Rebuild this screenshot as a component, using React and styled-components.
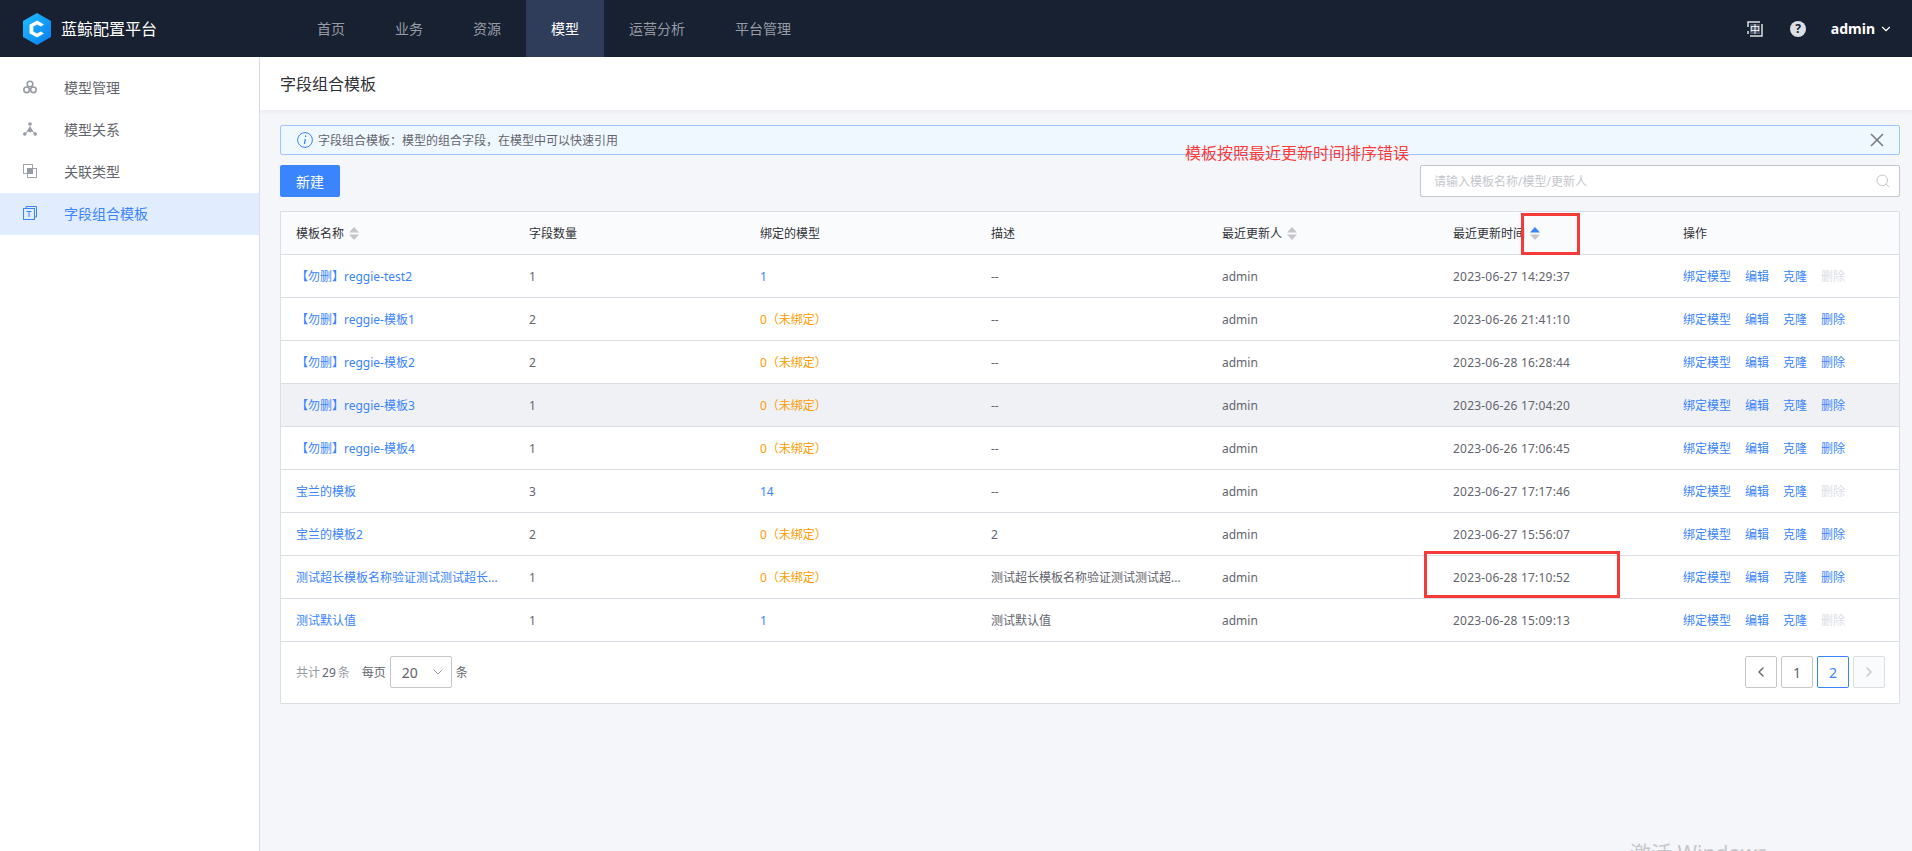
import React from 'react';
import styled, { createGlobalStyle } from 'styled-components';
import { ChevronDown, ChevronLeft, ChevronRight, Search, X } from 'lucide-react';

const GlobalStyle = createGlobalStyle`
  html, body {
    margin: 0;
    height: 100%;
    overflow: hidden;
    background: #f5f6fa;
  }
  body {
    font-family: "Noto Sans", "Noto Sans CJK SC", sans-serif;
    font-size: 12px;
    color: #63656e;
  }
  * {
    box-sizing: border-box;
  }
`;

const Page = styled.div`
  position: relative;
  width: 1912px;
  height: 851px;
  overflow: hidden;
`;

const TopBar = styled.header`
  display: flex;
  align-items: center;
  height: 57px;
  background: #182132;
`;

const Brand = styled.div`
  display: flex;
  align-items: center;
  gap: 10px;
  width: 292px;
  padding-left: 23px;
  font-size: 16px;
  color: #fff;
`;

const BrandName = styled.span`
  padding-bottom: 2px;
`;

const Nav = styled.nav`
  display: flex;
  align-self: stretch;
  flex: 1;
`;

const NavItem = styled.a`
  display: flex;
  align-items: center;
  padding: 0 25px 2px;
  font-size: 14px;
  color: ${props => (props.$active ? '#fff' : '#979ba5')};
  background: ${props => (props.$active ? '#2f3c5a' : 'transparent')};
`;

const TopRight = styled.div`
  display: flex;
  align-items: center;
  padding-right: 19px;
`;

const TopIcon = styled.span`
  display: flex;
  margin-right: 27px;
`;

const UserName = styled.span`
  display: flex;
  align-items: center;
  gap: 4px;
  margin-left: -2px;
  font-size: 14px;
  font-weight: 700;
  color: #fff;
`;

const Body = styled.div`
  display: flex;
  height: 794px;
`;

const Sidebar = styled.aside`
  width: 260px;
  padding-top: 10px;
  background: #fff;
  border-right: 1px solid #dcdee5;
`;

const SideItem = styled.a`
  display: flex;
  align-items: center;
  gap: 27px;
  height: 42px;
  padding: 0 0 2px 23px;
  font-size: 14px;
  color: ${props => (props.$active ? '#3a84ff' : '#63656e')};
  background: ${props => (props.$active ? '#e1ecff' : 'transparent')};
`;

const Main = styled.main`
  flex: 1;
  min-width: 0;
`;

const TitleBar = styled.div`
  display: flex;
  align-items: center;
  height: 53px;
  padding: 0 0 2px 20px;
  font-size: 16px;
  color: #313238;
  background: #fff;
  box-shadow: 0 2px 4px rgba(25, 25, 41, 0.05);
`;

const Content = styled.div`
  padding: 15px 12px 0 20px;
`;

const Alert = styled.div`
  display: flex;
  align-items: center;
  height: 30px;
  padding: 0 11px 0 16px;
  background: #f0f8ff;
  border: 1px solid #a3c5fd;
  border-radius: 2px;
`;

const AlertText = styled.span`
  flex: 1;
  margin-left: 5px;
`;

const Toolbar = styled.div`
  display: flex;
  justify-content: space-between;
  margin: 10px 0 14px;
`;

const PrimaryButton = styled.button`
  width: 60px;
  height: 32px;
  padding: 0;
  font: inherit;
  font-size: 14px;
  color: #fff;
  background: #3a84ff;
  border: none;
  border-radius: 2px;
`;

const SearchBox = styled.div`
  display: flex;
  align-items: center;
  justify-content: space-between;
  width: 480px;
  height: 32px;
  padding: 0 8px 0 13px;
  color: #c4c6cc;
  background: #fff;
  border: 1px solid #c4c6cc;
  border-radius: 2px;
`;

const TableCard = styled.div`
  background: #fff;
  border: 1px solid #dcdee5;
  border-radius: 1px;
`;

const Table = styled.table`
  width: 100%;
  border-collapse: collapse;
  table-layout: fixed;
`;

const Col = styled.col`
  width: ${props => props.$w}px;
`;

const Th = styled.th`
  height: 42px;
  padding: 0 15px;
  font-weight: 400;
  text-align: left;
  color: #313238;
  background: #fafbfd;
  border-bottom: 1px solid #dcdee5;
`;

const Tr = styled.tr`
  background: ${props => (props.$hover ? '#f0f1f5' : '#fff')};
`;

const Td = styled.td`
  height: 43px;
  padding: 1px 15px 0;
  white-space: nowrap;
  border-bottom: 1px solid #dcdee5;
`;

const TimeText = styled.span`
  letter-spacing: 0.2px;
`;

const Link = styled.a`
  color: ${props => (props.$disabled ? '#dcdee5' : '#3a84ff')};
  margin-right: ${props => props.$gap || 0}px;
`;

const Warn = styled.span`
  color: #ff9c01;
`;

const Footer = styled.div`
  display: flex;
  align-items: center;
  justify-content: space-between;
  height: 61px;
  padding: 0 14px 0 15px;
`;

const Total = styled.div`
  display: flex;
  align-items: center;
  color: #979ba5;
`;

const Strong = styled.span`
  margin: 0 2px;
  color: #63656e;
`;

const PerPage = styled.span`
  margin: 0 4px 0 12px;
  color: #63656e;
`;

const Unit = styled.span`
  color: #63656e;
`;

const PageSelect = styled.div`
  display: flex;
  align-items: center;
  justify-content: space-between;
  width: 62px;
  height: 32px;
  margin-right: 4px;
  padding: 0 5px 0 11px;
  font-size: 14px;
  color: #63656e;
  background: #fff;
  border: 1px solid #c4c6cc;
  border-radius: 2px;
`;

const Pager = styled.div`
  display: flex;
  gap: 4px;
`;

const PageButton = styled.span`
  display: flex;
  align-items: center;
  justify-content: center;
  width: 32px;
  height: 32px;
  font-size: 14px;
  color: ${props => (props.$current ? '#3a84ff' : props.$disabled ? '#c4c6cc' : '#63656e')};
  background: ${props => (props.$disabled ? '#fafbfd' : '#fff')};
  border: 1px solid ${props => (props.$current ? '#3a84ff' : props.$disabled ? '#dcdee5' : '#c4c6cc')};
  border-radius: 2px;
`;

const Note = styled.div`
  position: absolute;
  left: 1185px;
  top: 142px;
  font-size: 16px;
  line-height: 22px;
  color: #ff3a3a;
`;

const Mark = styled.div`
  position: absolute;
  left: ${props => props.$x}px;
  top: ${props => props.$y}px;
  width: ${props => props.$w}px;
  height: ${props => props.$h}px;
  border: 3px solid #f53a3a;
`;

const Watermark = styled.div`
  position: absolute;
  left: 1630px;
  top: 838px;
  font-size: 21px;
  line-height: 30px;
  color: #c6c7ca;
`;

const SortIcon = styled.svg`
  margin-left: 5px;
  vertical-align: -2px;
`;

const Sort = ({ active }) => (
  <SortIcon width="10" height="13" viewBox="0 0 10 13">
    <path d="M5 0 10 5.5H0Z" fill={active ? '#3a84ff' : '#c4c6cc'} />
    <path d="M0 7.5H10L5 13Z" fill="#c4c6cc" />
  </SortIcon>
);

const Logo = () => (
  <svg width="28" height="32" viewBox="0 0 28 32">
    <defs>
      <linearGradient id="logoFill" x1="0" y1="0" x2="1" y2="1">
        <stop offset="0" stopColor="#1ec0ff" />
        <stop offset="1" stopColor="#0a7bf0" />
      </linearGradient>
    </defs>
    <path d="M14 0 28 8V24L14 32 0 24V8Z" fill="url(#logoFill)" />
    <path d="M21 11.5 14 7.5 6.5 11.8V20.2L14 24.5 21 20.5 18 18.4 14 20.6 10.3 18.5V13.5L14 11.4 18 13.6Z" fill="#fff" />
  </svg>
);

const ModelIcon = () => (
  <svg width="14" height="14" viewBox="0 0 14 14" fill="none" stroke="#979ba5" strokeWidth="1.6">
    <circle cx="7" cy="4" r="2.8" />
    <circle cx="3.6" cy="9.8" r="2.8" />
    <circle cx="10.4" cy="9.8" r="2.8" />
  </svg>
);

const RelationIcon = () => (
  <svg width="14" height="14" viewBox="0 0 14 14" fill="#979ba5">
    <circle cx="7" cy="2" r="1.8" />
    <circle cx="1.8" cy="12" r="1.8" />
    <circle cx="12.2" cy="12" r="1.8" />
    <path d="M7 4 10 9 7 10.4 4 9Z" />
    <path d="M2 11.4 5 9M12 11.4 9 9" stroke="#979ba5" />
  </svg>
);

const LinkTypeIcon = () => (
  <svg width="14" height="14" viewBox="0 0 14 14" fill="none" stroke="#a3a6ae">
    <rect x="0.5" y="0.5" width="9" height="9" />
    <rect x="4.5" y="4.5" width="9" height="9" />
    <rect x="4" y="4" width="6" height="6" fill="#979ba5" stroke="none" />
  </svg>
);

const TemplateIcon = () => (
  <svg width="14" height="14" viewBox="0 0 14 14" fill="none" stroke="#3a84ff">
    <path d="M3 2.5V0.5H13.5V11H11.5" />
    <rect x="0.5" y="2.5" width="11" height="11" />
    <path d="M3.5 5.5H8.5M6 5.5V11" />
  </svg>
);

const InfoIcon = () => (
  <svg width="16" height="16" viewBox="0 0 16 16" fill="none">
    <circle cx="8" cy="8" r="7.4" stroke="#3a84ff" />
    <path d="M8.6 3.6V5M8.4 6.8 7.4 12" stroke="#3a84ff" strokeWidth="1.3" />
  </svg>
);

const LangIcon = () => (
  <svg width="16" height="16" viewBox="0 0 16 16">
    <path d="M1 6V1H13M15 3V15H3M1 13V10" fill="none" stroke="#dcdee5" strokeWidth="1.5" />
    <rect x="3" y="3" width="10" height="10" fill="#4a5468" />
    <text x="8" y="12" fontSize="10" textAnchor="middle" fill="#fff">中</text>
  </svg>
);

const HelpIcon = () => (
  <svg width="16" height="16" viewBox="0 0 16 16">
    <circle cx="8" cy="8" r="8" fill="#dcdee5" />
    <text x="8" y="12.2" fontSize="12" fontWeight="700" textAnchor="middle" fill="#182132">?</text>
  </svg>
);

const navItems = ['首页', '业务', '资源', '模型', '运营分析', '平台管理'];

const sideItems = [
  { label: '模型管理', icon: <ModelIcon /> },
  { label: '模型关系', icon: <RelationIcon /> },
  { label: '关联类型', icon: <LinkTypeIcon /> },
  { label: '字段组合模板', icon: <TemplateIcon />, active: true },
];

const colWidths = [233, 231, 231, 231, 231, 230];

const rows = [
  { name: '【勿删】reggie-test2', count: 1, bound: 1, desc: '--', time: '2023-06-27 14:29:37', locked: true },
  { name: '【勿删】reggie-模板1', count: 2, bound: 0, desc: '--', time: '2023-06-26 21:41:10' },
  { name: '【勿删】reggie-模板2', count: 2, bound: 0, desc: '--', time: '2023-06-28 16:28:44' },
  { name: '【勿删】reggie-模板3', count: 1, bound: 0, desc: '--', time: '2023-06-26 17:04:20', hover: true },
  { name: '【勿删】reggie-模板4', count: 1, bound: 0, desc: '--', time: '2023-06-26 17:06:45' },
  { name: '宝兰的模板', count: 3, bound: 14, desc: '--', time: '2023-06-27 17:17:46', locked: true },
  { name: '宝兰的模板2', count: 2, bound: 0, desc: '2', time: '2023-06-27 15:56:07' },
  { name: '测试超长模板名称验证测试测试超长...', count: 1, bound: 0, desc: '测试超长模板名称验证测试测试超...', time: '2023-06-28 17:10:52' },
  { name: '测试默认值', count: 1, bound: 1, desc: '测试默认值', time: '2023-06-28 15:09:13', locked: true },
];

function App() {
  return (
    <Page>
      <GlobalStyle />
      <TopBar>
        <Brand>
          <Logo />
          <BrandName>蓝鲸配置平台</BrandName>
        </Brand>
        <Nav>
          {navItems.map(item => (
            <NavItem key={item} $active={item === '模型'}>{item}</NavItem>
          ))}
        </Nav>
        <TopRight>
          <TopIcon><LangIcon /></TopIcon>
          <TopIcon><HelpIcon /></TopIcon>
          <UserName>admin <ChevronDown size={14} strokeWidth={2} /></UserName>
        </TopRight>
      </TopBar>
      <Body>
        <Sidebar>
          {sideItems.map(item => (
            <SideItem key={item.label} $active={item.active}>
              {item.icon}
              {item.label}
            </SideItem>
          ))}
        </Sidebar>
        <Main>
          <TitleBar>字段组合模板</TitleBar>
          <Content>
            <Alert>
              <InfoIcon />
              <AlertText>字段组合模板：模型的组合字段，在模型中可以快速引用</AlertText>
              <X size={22} strokeWidth={1.8} color="#7a7d86" />
            </Alert>
            <Toolbar>
              <PrimaryButton>新建</PrimaryButton>
              <SearchBox>
                请输入模板名称/模型/更新人
                <Search size={16} strokeWidth={1.5} color="#c4c6cc" />
              </SearchBox>
            </Toolbar>
            <TableCard>
              <Table>
                <colgroup>
                  {colWidths.map((w, i) => <Col key={i} $w={w} />)}
                  <col />
                </colgroup>
                <thead>
                  <tr>
                    <Th>模板名称<Sort /></Th>
                    <Th>字段数量</Th>
                    <Th>绑定的模型</Th>
                    <Th>描述</Th>
                    <Th>最近更新人<Sort /></Th>
                    <Th>最近更新时间<Sort active /></Th>
                    <Th>操作</Th>
                  </tr>
                </thead>
                <tbody>
                  {rows.map(row => (
                    <Tr key={row.name + row.time} $hover={row.hover}>
                      <Td><Link>{row.name}</Link></Td>
                      <Td>{row.count}</Td>
                      <Td>
                        {row.bound > 0 ? <Link>{row.bound}</Link> : <Warn>0（未绑定）</Warn>}
                      </Td>
                      <Td>{row.desc}</Td>
                      <Td>admin</Td>
                      <Td><TimeText>{row.time}</TimeText></Td>
                      <Td>
                        <Link $gap={14}>绑定模型</Link>
                        <Link $gap={14}>编辑</Link>
                        <Link $gap={14}>克隆</Link>
                        <Link $disabled={row.locked}>删除</Link>
                      </Td>
                    </Tr>
                  ))}
                </tbody>
              </Table>
              <Footer>
                <Total>
                  共计<Strong>29</Strong>条
                  <PerPage>每页</PerPage>
                  <PageSelect>20 <ChevronDown size={16} strokeWidth={1.5} color="#979ba5" /></PageSelect>
                  <Unit>条</Unit>
                </Total>
                <Pager>
                  <PageButton><ChevronLeft size={16} strokeWidth={2} /></PageButton>
                  <PageButton>1</PageButton>
                  <PageButton $current>2</PageButton>
                  <PageButton $disabled><ChevronRight size={16} strokeWidth={2} /></PageButton>
                </Pager>
              </Footer>
            </TableCard>
          </Content>
        </Main>
      </Body>
      <Note>模板按照最近更新时间排序错误</Note>
      <Mark $x={1521} $y={213} $w={59} $h={42} />
      <Mark $x={1424} $y={551} $w={196} $h={47} />
      <Watermark>激活 Windows</Watermark>
    </Page>
  );
}

export default App;
